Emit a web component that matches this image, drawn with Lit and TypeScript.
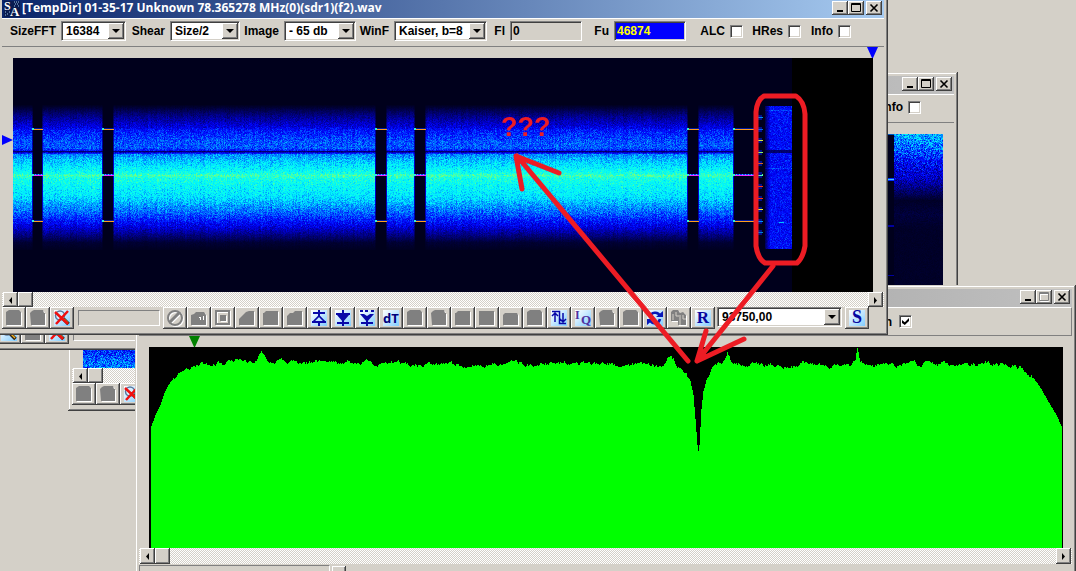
import { LitElement, html, svg, css } from "lit";
import { customElement, property } from "lit/decorators.js";

const chrome = css`
  * { box-sizing: border-box; }
  :host {
    display: block;
    font: bold 12px/16px "Liberation Sans", Arial, sans-serif;
    color: #000;
  }
  button { margin: 0; padding: 0; border: 0; font: inherit; color: inherit; }
  .outer {
    background: #d4d0c8;
    box-shadow: inset -1px -1px #404040, inset 1px 1px #d4d0c8,
      inset -2px -2px #808080, inset 2px 2px #fff;
    padding: 4px;
  }
  .title {
    display: flex;
    height: 18px;
    padding: 1px 2px 0 2px;
    color: #fff;
    background: linear-gradient(90deg, #808080, #c0c0c0);
  }
  .title.active { background: linear-gradient(90deg, #0a246a, #a6caf0); }
  .title .caption {
    flex: 1;
    padding-left: 2px;
    font-family: "Open Sans", "Liberation Sans", sans-serif;
    line-height: 14px;
    white-space: nowrap;
  }
  .bevel {
    display: grid;
    place-items: center;
    background: #d4d0c8;
    box-shadow: inset -1px -1px #404040, inset 1px 1px #fff, inset -2px -2px #808080;
  }
  .title .bevel { width: 16px; height: 14px; }
  .title .close { margin-left: 2px; }
  .bar { border-top: 1px solid #fff; border-bottom: 1px solid #808080; padding: 2px 0 5px; }
  .sunk {
    border: 1px solid;
    border-color: #808080 #fff #fff #808080;
    box-shadow: inset 1px 1px #404040, inset -1px -1px #d4d0c8;
    background: #fff;
  }
  .check {
    appearance: none;
    width: 13px;
    height: 13px;
    margin: 0;
    display: grid;
    place-items: center;
  }
  .check:checked::before {
    content: "";
    width: 7px;
    height: 7px;
    background: #000;
    clip-path: polygon(0 28%, 40% 62%, 100% 0, 100% 42%, 40% 100%, 0 70%);
  }
  .scroll {
    display: flex;
    height: 15px;
    padding: 0 1px;
    background: repeating-conic-gradient(#fff 0 25%, #d4d0c8 0 50%) 0 0 / 2px 2px;
  }
  .scroll .bevel { width: 15px; }
  .scroll .last { margin-left: auto; }
  svg { display: block; }
`;

const minimize = html`<svg width="12" height="10"><path d="M3 7h6v2h-6z" /></svg>`;
const maximize = (off = false) => html`<svg width="12" height="12">
  ${off ? svg`<path d="M2.5 2.5h8v8h-8zM2 3.5h9" fill="none" stroke="#fff" />` : ""}
  <path d="M1.5 1.5h9v8h-9zM1 2.5h10" fill="none" stroke=${off ? "#808080" : "#000"} /></svg>`;
const cross = html`<svg width="12" height="10"><path d="M2.5 1.5l7 7M9.5 1.5l-7 7" stroke="#000" stroke-width="1.6" /></svg>`;
const left = html`<svg width="8" height="8"><path d="M5 1v7l-3-3.500z" /></svg>`;
const right = html`<svg width="8" height="8"><path d="M2 1v7l3-3.500z" /></svg>`;

const titleButtons = (noMax = false) => html`
  <button class="bevel" aria-label="Minimize">${minimize}</button>
  <button class="bevel" aria-label="Maximize" ?disabled=${noMax}>${maximize(noMax)}</button>
  <button class="bevel close" aria-label="Close">${cross}</button>`;

const scrollBar = () => html`<div class="scroll">
  <button class="bevel" aria-label="Scroll left">${left}</button>
  <span class="bevel"></span>
  <button class="bevel last" aria-label="Scroll right">${right}</button>
</div>`;

/* ---------- toolbar glyphs, drawn on an 18 x 18 grid ---------- */

const sheet = svg`<rect x="1" y="1" width="16" height="16" fill="url(#sky)" />`;
const embossed = (d: string) => svg`
  <path d=${d} fill="#fff" transform="translate(1 1)" /><path d=${d} fill="#808080" />`;
const lens = svg`
  <circle cx="7" cy="6.5" r="4.5" fill="#d8efff" stroke="#5878a0" stroke-width="1.5" />
  <path d="M10.5 10l5 5" stroke="#302010" stroke-width="3.5" />
  <path d="M11 10l4 4" stroke="#f0b020" stroke-width="1.5" />`;

const glyphs: Record<string, unknown> = {
  blobA: embossed("M1 3l3-2h10l2 2v13H1z"),
  blobB: embossed("M1 4l2-2 2-1h9l1 3h1v12H2z"),
  dots: svg`${embossed("M1 6l3-1 2-2h8l2 3v10H1z")}<path d="M9 8h2v3h-1v-2h-1zM13 7h1v4h-1z" fill="#fff" />`,
  slope: embossed("M1 10l7-7 3-1h5v14H1z"),
  folder: embossed("M1 4h1l2-2h12v14H1z"),
  folders: embossed("M1 7l3-3h3l2-2h7v14H1z"),
  square: embossed("M1 2h15v14H1z"),
  low: embossed("M1 6l2-2h12l1 2v10H1z"),
  none: svg`<g fill="none" stroke-width="2"><path d="M4.5 15l11-11" stroke="#fff" /><circle cx="10" cy="10" r="7" stroke="#fff" />
    <circle cx="9" cy="9" r="7" stroke="#808080" /><path d="M4 13L13 4" stroke="#808080" stroke-width="3" /></g>`,
  target: svg`<g fill="none" stroke-width="2"><path d="M3 3h13v13H3z" stroke="#fff" /><path d="M2 2h13v13H2z" stroke="#808080" /></g>
    <path d="M7 7h6v6H7z" fill="#fff" /><path d="M6 6h6v6H6z" fill="#808080" />`,
  zoom: svg`${sheet}${lens}`,
  zoomOff: svg`${sheet}${lens}<path d="M2 3l13 12M15 2L3 15" stroke="#f01010" stroke-width="2.5" />`,
  rise: svg`${sheet}<g fill="none" stroke="#0808a8" stroke-width="2"><path d="M3 4h12M9 1v6M2 13h14M9 13v4" /><path d="M3 13l6-6 6 6" stroke-width="1.7" /></g>`,
  fall: svg`${sheet}<g fill="none" stroke="#0808a8" stroke-width="2"><path d="M2 5h14M9 1v4M3 14h12M9 12v5" /></g><path d="M3 6h12l-6 7z" fill="#0808a8" />`,
  fallDots: svg`${sheet}<g fill="none" stroke="#0808a8" stroke-width="2"><path d="M2 2h3M7 2h3M13 2h3M3 14h12M9 12v5" /></g><path d="M2 5h4l3 2 3-2h4l-7 8z" fill="#0808a8" />`,
  dT: svg`${sheet}<text x="9" y="14" text-anchor="middle" font-family="Open Sans" font-size="13" fill="#00007c">dT</text>`,
  swap: svg`${sheet}<g fill="none" stroke="#0808a8" stroke-width="1.5"><path d="M5 13V4M2 7l3-3 3 3M2 2.5h7.500v12H16M13 4v9M10 10l3 3 3-3" /></g>`,
  iq: svg`${sheet}<g font-family="Liberation Serif" fill="#5030a0"><text x="1" y="10" font-size="12">I</text><text x="7" y="15" font-size="13">Q</text></g>`,
  cycle: svg`${sheet}<g fill="none" stroke="#0818b8" stroke-width="2.5"><path d="M4 8c1-5 8-6 10-1M14 10c-1 5-8 6-10 1" /></g><path d="M10 8h7V2zM8 10H1v6z" fill="#0818b8" />`,
  copy: svg`${embossed("M1 3l2-2h5l2 3 3-1 3 3v10H8v-4H1z")}<path d="M6 3v4h3M10 6v10M13 6v4h3M3 5v6" fill="none" stroke="#d4d0c8" />`,
  R: svg`${sheet}<text x="9" y="14" text-anchor="middle" font-family="Liberation Serif" font-size="17" fill="#0808a0">R</text>`,
  S: svg`${sheet}<text x="9" y="14" text-anchor="middle" font-family="Liberation Serif" font-size="18" fill="#0808a0">S</text>`,
};

const glyph = (name: string) => html`<svg width="18" height="18" viewBox="0 0 18 18">
  <defs><linearGradient id="sky" x1="0" y1="0" x2="1" y2="1">
    <stop offset="0" stop-color="#fff" /><stop offset="0.4" stop-color="#d0ecff" /><stop offset="1" stop-color="#80ccff" />
  </linearGradient></defs>${glyphs[name]}</svg>`;

/* ---------- spectrogram painting ---------- */

type RGB = [number, number, number];
const ramp: [number, RGB][] = [
  [0, [0, 0, 28]], [0.35, [0, 0, 235]], [0.42, [0, 20, 255]],
  [0.7, [0, 235, 255]], [0.8, [10, 255, 235]], [1, [150, 255, 90]],
];

function tone(v: number): RGB {
  const t = Math.max(0, Math.min(1, v));
  for (let i = 1; i < ramp.length; i++) {
    if (t <= ramp[i][0]) {
      const [a, ca] = ramp[i - 1];
      const [b, cb] = ramp[i];
      const k = (t - a) / (b - a);
      return [0, 1, 2].map((n) => ca[n] + (cb[n] - ca[n]) * k) as RGB;
    }
  }
  return ramp[ramp.length - 1][1];
}

function level(points: [number, number][], y: number): number {
  for (let i = 1; i < points.length; i++) {
    const [y0, v0] = points[i - 1];
    const [y1, v1] = points[i];
    if (y <= y1) return y < y0 ? v0 : v0 + ((v1 - v0) * (y - y0)) / (y1 - y0);
  }
  return points[points.length - 1][1];
}

function randomizer(seed: number) {
  let s = seed;
  return () => {
    s = (Math.imul(s, 1664525) + 1013904223) >>> 0;
    return s / 4294967296;
  };
}

const band: [number, number][] = [
  [46, 0], [49, 0.04], [57, 0.17], [69, 0.34], [72, 0.41], [84, 0.5], [90, 0.5],
  [92, 0.4], [93, 0.14], [94, 0.3], [96, 0.57], [103, 0.66], [110, 0.73], [115, 0.8], [117, 0.88],
  [120, 0.8], [128, 0.75], [138, 0.7], [148, 0.59], [156, 0.5], [163, 0.4], [168, 0.33], [176, 0.18],
  [184, 0.04], [191, 0.01],
];
const gaps: [number, number][] = [[19, 30], [89, 101], [362, 374], [401, 413], [674, 686], [720, 745]];

function paintSignal(ctx: CanvasRenderingContext2D) {
  const rnd = randomizer(17);
  const img = ctx.createImageData(860, 234);
  const column = Array.from({ length: 860 }, () => rnd() - 0.5);
  for (let y = 0; y < 234; y++) {
    const base = level(band, y);
    for (let x = 0; x < 860; x++) {
      const n = rnd() + rnd() - 1;
      let v = 0;
      if (x <= 720 && y > 46 && y < 192 && !gaps.some(([a, b]) => x > a && x < b - 1)) {
        v = base + n * 0.13 * Math.min(1, base * 3) + column[x] * 0.05 * Math.min(1, base * 6);
        if (gaps.some(([a, b]) => x === a || x === b - 1)) v = Math.min(v * 0.5, 0.3);
      } else if (x >= 752 && x < 779 && y >= 48 && y < 191) {
        v = (0.39 + n * 0.12) * Math.min(1, (x - 750) / 7);
        if (y === 52 || y === 110) v += 0.08;
        if (y > 91 && y < 95) v *= 0.35;
        if (y === 164 && x > 765 && x < 771) v = 0.65;
      }
      const c = x >= 779 ? [0, 0, 0] : tone(v);
      img.data.set([c[0], c[1], c[2], 255], (y * 860 + x) * 4);
    }
  }
  ctx.putImageData(img, 0, 0);
  for (const [a, b] of gaps) {
    for (const [y, main, glow] of [[71, "#ff9c20", "#0018a0"], [117, "#f030ff", "#2020ff"], [163, "#ff9c20", "#0018a0"]] as const) {
      ctx.fillStyle = glow;
      ctx.fillRect(a, y - 1, b - a, 1);
      ctx.fillStyle = main;
      ctx.fillRect(a, y, b - a, 1);
      ctx.fillStyle = "#30f0d0";
      ctx.fillRect(a, y - 1, 2, 2);
    }
    ctx.fillStyle = "#20e0f0";
    for (let x = a + 3; x < b; x += 3) ctx.fillRect(x, 116, 1, 1);
  }
  const ticks: [number, string][] = [
    [59, "#0090f0"], [71, "#0060ff"], [82, "#d8e840"], [94, "#90f060"], [105, "#e06020"], [116, "#50ff80"],
    [117, "#50ffc0"], [128, "#ff3010"], [140, "#ff3010"], [151, "#f0f040"], [163, "#0090ff"], [174, "#0080d0"],
  ];
  for (const [y, color] of ticks) {
    ctx.fillStyle = "#001090";
    ctx.fillRect(745, y - 2, 4, 5);
    ctx.fillStyle = color;
    ctx.fillRect(745, y, 5, 1);
  }
}

const fade: [number, number][] = [
  [0, 0.62], [12, 0.54], [20, 0.46], [30, 0.36], [44, 0.28], [56, 0.14], [66, 0.02], [80, 0.05],
  [95, 0.02], [150, 0.02], [190, 0.1], [210, 0.42], [233, 0.55],
];

function paintFaded(ctx: CanvasRenderingContext2D) {
  const rnd = randomizer(5);
  const img = ctx.createImageData(860, 234);
  for (let y = 0; y < 234; y++) {
    const base = level(fade, y);
    for (let x = 0; x < 860; x++) {
      const silent = x > 790 && x < 811;
      const v = silent ? 0 : base + (rnd() + rnd() - 1) * 0.22 * Math.min(1, base * 3);
      const c = tone(v);
      img.data.set([c[0], c[1], c[2], 255], (y * 860 + x) * 4);
    }
  }
  ctx.putImageData(img, 0, 0);
  for (const [y, color, h] of [[0, "#0058c0", 1], [44, "#0030ff", 3], [45, "#40c8ff", 1], [91, "#0000a0", 2], [141, "#0000a0", 1]] as const) {
    ctx.fillStyle = color;
    ctx.fillRect(791, y, 20, h);
  }
}

@customElement("spectrogram-window")
class SpectrogramWindow extends LitElement {
  @property() caption = "";
  @property({ type: Boolean }) active = false;
  @property() signal = "none";
  @property({ type: Boolean }) zoomed = false;

  static styles = [chrome, css`
    .logo { width: 16px; height: 16px; }
    .fields {
      display: grid;
      grid-template-columns: 59px 65px 44px 70px 44px 72px 38px 93px 23px 72px 32px 72px 44px 13px 45px 13px 37px 13px;
      align-items: center;
    }
    .fields label { text-align: right; padding-right: 5px; white-space: nowrap; }
    .combo { display: grid; grid-template-columns: 1fr 16px; height: 20px; padding: 1px; }
    .combo select {
      appearance: none;
      grid-area: 1 / 1 / 2 / 3;
      min-width: 0;
      border: 0;
      margin: 0;
      padding: 0 0 0 3px;
      font: inherit;
      line-height: 16px;
      background: none;
      color: #000;
      border-radius: 0;
    }
    .combo .bevel { grid-area: 1 / 2; pointer-events: none; }
    .text { width: 100%; min-width: 0; height: 20px; padding: 0 2px; font: inherit; color: #000; border-radius: 0; background: #d4d0c8; }
    .text.upper { background: #00f; color: #ff0; }
    .plot { display: grid; grid-template: 11px auto / 11px 1fr 11px; }
    .top { grid-column: 1 / 4; display: flex; justify-content: flex-end; padding-right: 6px; }
    .side { padding-top: 77px; }
    .plot canvas { display: block; width: 100%; height: 234px; background: #00001c; image-rendering: pixelated; }
    .tools { display: flex; padding-bottom: 2px; }
    .tools > .bevel { width: 24px; height: 22px; }
    .progress { width: 82px; height: 16px; margin: 3px 3px 3px 4px; border: 1px solid; border-color: #808080 #fff #fff #808080; }
    .rate { width: 125px; margin: 0 3px 0 2px; }
  `];

  firstUpdated() {
    const ctx = this.renderRoot.querySelector("canvas")?.getContext("2d");
    if (!ctx) return;
    if (this.signal === "signal") paintSignal(ctx);
    if (this.signal === "faded") paintFaded(ctx);
  }

  private combo(id: string, value: string, cls = "") {
    return html`<span class="combo sunk ${cls}">
      <select id=${id} aria-label=${id}><option>${value}</option></select>
      <span class="bevel"><svg width="8" height="5"><path d="M0 0h8l-4 4z" /></svg></span>
    </span>`;
  }

  private tool(name: string) {
    return html`<button class="bevel" aria-label=${name}>${glyph(name)}</button>`;
  }

  render() {
    const middle = ["none", "dots", "target", "slope", "folder", "folders", "rise", "fall", "fallDots", "dT",
      "blobA", "blobB", "folder", "square", "low", "blobA", "swap", "iq", "blobB", "blobA", "cycle", "copy", "R"];
    const first = this.zoomed ? ["zoom", "square", "zoomOff"] : ["blobA", "blobB", "zoomOff"];
    return html`<section class="outer">
      <header class="title ${this.active ? "active" : ""}">
        <svg class="logo" viewBox="0 0 16 16">
          <rect width="16" height="16" fill="#0a1c50" />
          <path d="M10 1h1M12 1h1M14 1h1M11 3h1M13 3h1M10 5h1M14 5h1M1 11h1M3 13h1M1 14h1M5 11h1" stroke="#9cc4e8" />
          <g font-family="Liberation Serif" fill="#fff"><text x="0" y="9" font-size="12">S</text><text x="6" y="15" font-size="13">A</text></g>
        </svg>
        <span class="caption">${this.caption}</span>
        ${titleButtons()}
      </header>
      <div class="bar fields">
        <label for="SizeFFT">SizeFFT</label>${this.combo("SizeFFT", "16384")}
        <label for="Shear">Shear</label>${this.combo("Shear", "Size/2")}
        <label for="Image">Image</label>${this.combo("Image", "- 65 db")}
        <label for="WinF">WinF</label>${this.combo("WinF", "Kaiser, b=8")}
        <label for="fl">Fl</label><input id="fl" class="text sunk" .value=${"0"} />
        <label for="fu">Fu</label><input id="fu" class="text upper sunk" .value=${"46874"} />
        <label for="alc">ALC</label><input id="alc" type="checkbox" class="check sunk" />
        <label for="hres">HRes</label><input id="hres" type="checkbox" class="check sunk" />
        <label for="info">Info</label><input id="info" type="checkbox" class="check sunk" />
      </div>
      <div class="plot">
        <div class="top">${this.active ? html`<svg width="11" height="11"><path d="M0 0h11l-5 11h-1z" fill="#00f" /></svg>` : ""}</div>
        <div class="side">${this.active ? html`<svg width="11" height="10"><path d="M0 0l11 5-11 5z" fill="#00f" /></svg>` : ""}</div>
        <canvas width="860" height="234"></canvas>
      </div>
      ${scrollBar()}
      <div class="tools">
        ${first.map((n) => this.tool(n))}
        <span class="progress"></span>
        ${middle.map((n) => this.tool(n))}
        ${this.combo("Rate", "93750,00", "rate")}
        ${this.tool("S")}
      </div>
    </section>`;
  }
}

@customElement("spectrum-window")
class SpectrumWindow extends LitElement {
  static styles = [chrome, css`
    .options { display: flex; justify-content: flex-end; align-items: center; gap: 7px; height: 29px; padding: 2px 159px 2px 0; border-right: 1px solid #808080; }
    .marker { height: 11px; padding-left: 50px; }
    .plot { padding: 0 9px 0 10px; }
    .plot svg { width: 100%; height: 201px; background: #000; }
    .scroll { height: 16px; }
    .status { display: flex; gap: 2px; margin-top: 1px; height: 24px; }
    .panel { width: 191px; border: 1px solid; border-color: #808080 #fff #fff #808080; }
    .status .bevel { width: 14px; height: 22px; margin-top: 1px; }
  `];

  private outline() {
    const shape: [number, number][] = [
      [2, 79], [6, 68], [11, 58], [15, 46], [19, 38], [24, 31], [28, 27], [35, 23], [45, 18], [60, 16],
      [105, 14], [112, 8], [122, 15], [200, 16], [300, 18], [400, 17], [500, 17], [516, 17], [519, 9],
      [524, 13], [530, 21], [537, 26], [541, 34], [544, 48], [546, 72], [548, 98], [549, 104], [550, 98],
      [552, 62], [554, 44], [557, 33], [562, 23], [568, 18], [574, 16], [578, 6], [581, 14], [590, 17], [640, 18],
      [700, 17], [706, 13], [708, 2], [711, 15], [760, 18], [860, 16], [872, 21], [882, 28], [892, 42],
      [899, 55], [907, 68], [912, 79],
    ];
    const rnd = randomizer(41);
    let drift = 0;
    let d = "M2 201";
    for (let x = 2; x <= 912; x++) {
      drift = drift * 0.82 + (rnd() - 0.5) * 3.4;
      const base = level(shape, x);
      const amount = base > 30 ? 0.1 : 1;
      d += `V${Math.round(base + drift * amount)}H${x + 1}`;
    }
    return d + "V201z";
  }

  render() {
    return html`<section class="outer">
      <header class="title"><span class="caption"></span>${titleButtons(true)}</header>
      <div class="bar options">
        <label for="on">n</label><input id="on" type="checkbox" class="check sunk" checked />
      </div>
      <div class="marker"><svg width="11" height="11"><path d="M0 0h11l-5 11h-1z" fill="#008000" /></svg></div>
      <div class="plot"><svg viewBox="0 0 914 201" preserveAspectRatio="none" shape-rendering="crispEdges">
        <path d=${this.outline()} fill="#0f0" /></svg></div>
      ${scrollBar()}
      <div class="status"><span class="panel"></span><span class="bevel"></span></div>
    </section>`;
  }
}

@customElement("app-root")
class AppRoot extends LitElement {
  static styles = css`
    :host { display: block; }
    .desktop { position: relative; height: 100vh; overflow: hidden; background: #d4d0c8; }
    .desktop > * { position: absolute; }
    .back { left: 68px; top: 72px; width: 890px; }
    .side { left: -7px; top: 11px; width: 890px; }
    .spectrum { left: 135px; right: 0; top: 285px; }
    .main { left: -2px; top: -4px; width: 890px; }
    .notes { left: 0; top: 0; pointer-events: none; }
    .question { font: bold 27px "Liberation Sans", Arial, sans-serif; fill: #ed1c24; }
  `;

  render() {
    return html`<main class="desktop">
      <spectrogram-window class="back" signal="faded"></spectrogram-window>
      <spectrogram-window class="side" zoomed></spectrogram-window>
      <spectrum-window class="spectrum"></spectrum-window>
      <spectrogram-window class="main" active signal="signal"
        caption="[TempDir] 01-35-17 Unknown 78.365278 MHz(0)(sdr1)(f2).wav"></spectrogram-window>
      <svg class="notes" width="1076" height="571" viewBox="0 0 1076 571">
        <g fill="none" stroke="#ed1c24" stroke-width="5" stroke-linecap="round" stroke-linejoin="round">
          <path d="M764 96h32q8 5 9 18v132q-2 12-8 17h-32q-7-4-9-17V112q1-12 8-16z" />
          <path d="M773 266L697 361M706 331L697 361L744 339M688 361L517 156M522 189L516 156L559 173" />
        </g>
        <text class="question" x="501" y="136">???</text>
      </svg>
    </main>`;
  }
}
